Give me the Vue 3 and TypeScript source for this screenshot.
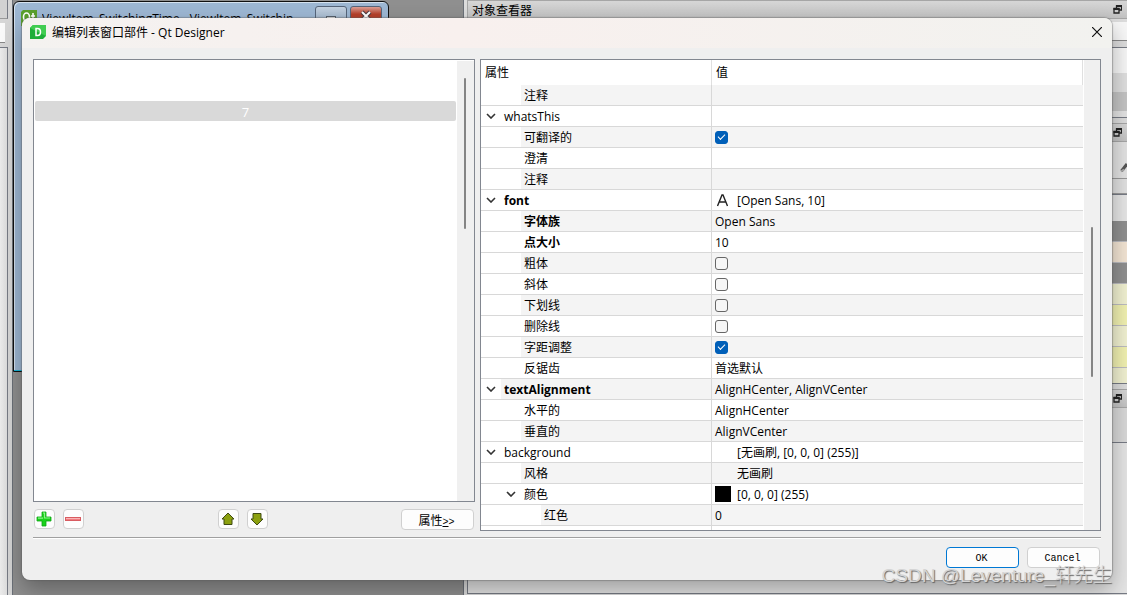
<script setup lang="ts">
interface PropertyRow {
  level: 0 | 1 | 2
  name: string
  value?: string
  expandable?: boolean
  changed?: boolean
  checked?: boolean
  icon?: 'font' | 'swatch' | 'none'
}

const rows: PropertyRow[] = [
  { level: 1, name: '注释' },
  { level: 0, name: 'whatsThis', expandable: true },
  { level: 1, name: '可翻译的', checked: true },
  { level: 1, name: '澄清' },
  { level: 1, name: '注释' },
  { level: 0, name: 'font', expandable: true, changed: true, value: '[Open Sans, 10]', icon: 'font' },
  { level: 1, name: '字体族', changed: true, value: 'Open Sans' },
  { level: 1, name: '点大小', changed: true, value: '10' },
  { level: 1, name: '粗体', checked: false },
  { level: 1, name: '斜体', checked: false },
  { level: 1, name: '下划线', checked: false },
  { level: 1, name: '删除线', checked: false },
  { level: 1, name: '字距调整', checked: true },
  { level: 1, name: '反锯齿', value: '首选默认' },
  { level: 0, name: 'textAlignment', expandable: true, changed: true, value: 'AlignHCenter, AlignVCenter' },
  { level: 1, name: '水平的', value: 'AlignHCenter' },
  { level: 1, name: '垂直的', value: 'AlignVCenter' },
  { level: 0, name: 'background', expandable: true, value: '[无画刷, [0, 0, 0] (255)]', icon: 'none' },
  { level: 1, name: '风格', value: '无画刷', icon: 'none' },
  { level: 1, name: '颜色', expandable: true, value: '[0, 0, 0] (255)', icon: 'swatch' },
  { level: 2, name: '红色', value: '0' },
  { level: 2, name: '' },
]

const listItems: string[] = ['', '', '7']
const selectedIndex = 2

const editorRows: string[] = ['gray', 'peach', 'gray', 'pale', 'yellow', 'pale', 'yellow', 'pale last']
</script>

<template>
  <div class="desktop">
    <div class="left-dock">
      <div class="tool-box"></div>
      <div class="field-box"></div>
      <div class="panel-box"></div>
    </div>

    <div class="mdi">
      <div class="form-window">
        <div class="form-title">
          <svg class="qt-icon" viewBox="0 0 16 16" aria-hidden="true">
            <path d="M2 0h14v14l-2 2H0V2z" fill="#5aa02c" />
            <ellipse cx="5.500" cy="7" rx="3" ry="4" fill="none" stroke="#fff" stroke-width="1.600" />
            <path d="M6 9l3 4M12 3v8h2M10 6h4" fill="none" stroke="#fff" stroke-width="1.600" />
          </svg>
          <span class="form-name">ViewItem_SwitchingTime - ViewItem_Switchin...</span>
          <button class="win-btn" type="button" aria-label="Minimize">
            <svg viewBox="0 0 12 12"><rect x="1.500" y="6.500" width="9" height="4" fill="#fff" stroke="#555f6c" /></svg>
          </button>
          <button class="win-btn close" type="button" aria-label="Close form">
            <svg viewBox="0 0 12 12">
              <path d="M2 2l8 8M10 2l-8 8" stroke="#4b3c42" stroke-width="4" />
              <path d="M2 2l8 8M10 2l-8 8" stroke="#fff" stroke-width="2" />
            </svg>
          </button>
        </div>
      </div>
    </div>

    <div class="right-dock">
      <div class="dock-head">
        <span>对象查看器</span>
        <svg class="float-icon" viewBox="0 0 9 9"><path d="M3.500 3V1h5v4H6M1 3.500h5v4.500H1z" fill="none" stroke="#222" stroke-width="1.300" /><path d="M3 1h6M.5 4h6" stroke="#222" stroke-width="2" /></svg>
      </div>
      <div class="filter"></div>
      <div class="object-list"><i></i><i class="mid"></i><i class="sel"></i></div>
      <div class="dock-head second">
        <svg class="float-icon" viewBox="0 0 9 9"><path d="M3.500 3V1h5v4H6M1 3.500h5v4.500H1z" fill="none" stroke="#222" stroke-width="1.300" /><path d="M3 1h6M.5 4h6" stroke="#222" stroke-width="2" /></svg>
      </div>
      <div class="tools">
        <svg viewBox="0 0 7 12"><path d="M1.500 10L7 3" stroke="#555" stroke-width="3" /><path d="M1 10.500l3-2" stroke="#aaa" stroke-width="2" /></svg>
      </div>
      <div class="object-name"></div>
      <div class="editor">
        <i v-for="(tone, i) in editorRows" :key="i" :class="tone"></i>
      </div>
      <div class="dock-head third">
        <svg class="float-icon" viewBox="0 0 9 9"><path d="M3.500 3V1h5v4H6M1 3.500h5v4.500H1z" fill="none" stroke="#222" stroke-width="1.300" /><path d="M3 1h6M.5 4h6" stroke="#222" stroke-width="2" /></svg>
      </div>
      <div class="resource-bar"></div>
      <div class="resource-body"></div>
    </div>

    <section class="dialog" role="dialog" aria-labelledby="dialog-title">
      <header class="titlebar">
        <svg class="app-icon" viewBox="0 0 16 14" aria-hidden="true">
          <path d="M3 0h13v11l-3 3H0V3z" fill="#1fae3a" />
          <path d="M3 0h13v11L0 3z" fill="#41cd52" />
          <path d="M6 3.500h1.500a3 3.500 0 0 1 0 7H6z" fill="none" stroke="#fff" stroke-width="1.500" />
        </svg>
        <h1 id="dialog-title">编辑列表窗口部件 - Qt Designer</h1>
        <button class="close-btn" type="button" aria-label="Close">
          <svg viewBox="0 0 10 10"><path d="M0 0l10 10M10 0L0 10" stroke="#111" stroke-width="1.200" /></svg>
        </button>
      </header>

      <div class="content">
        <div class="panes">
          <div class="items-pane">
            <div class="list-box">
              <ul>
                <li v-for="(item, i) in listItems" :key="i" :class="{ selected: i === selectedIndex }">{{ item }}</li>
              </ul>
              <div class="scroll"><div class="thumb"></div></div>
            </div>
            <div class="item-tools">
              <button class="tool" type="button" aria-label="New item">
                <svg viewBox="0 0 16 16">
                  <path d="M6 1h4v5h5v4h-5v5H6v-5H1V6h5z" fill="#19d21b" stroke="#0ca514" stroke-width=".8" />
                  <path d="M7 2h1.500v5H14M2 7.200h5" fill="none" stroke="#8df58a" stroke-width="1.200" />
                </svg>
              </button>
              <button class="tool" type="button" aria-label="Delete item">
                <svg viewBox="0 0 16 16">
                  <rect x=".5" y="6.500" width="15" height="3" fill="#f07c80" stroke="#d85b60" />
                  <path d="M1 7.500h14" stroke="#f9b3b5" />
                </svg>
              </button>
              <span class="gap"></span>
              <button class="tool" type="button" aria-label="Move item up">
                <svg viewBox="0 0 16 16"><path d="M8 2l6 6h-2v5.500H4V8H2z" fill="#8ba00f" stroke="#3f4a12" stroke-linejoin="round" /></svg>
              </button>
              <button class="tool" type="button" aria-label="Move item down">
                <svg viewBox="0 0 16 16"><path d="M8 14l6-6h-2V2.500H4V8H2z" fill="#8ba00f" stroke="#3f4a12" stroke-linejoin="round" /></svg>
              </button>
              <span class="gap wide"></span>
              <button class="push" type="button">属性<span class="latin"><u>&gt;</u>&gt;</span></button>
            </div>
          </div>

          <div class="tree-box">
            <div class="tree-view">
              <table>
                <thead>
                  <tr><th scope="col" class="col-name">属性</th><th scope="col" class="col-value">值</th></tr>
                </thead>
                <tbody>
                  <tr v-for="(row, i) in rows" :key="i" :class="{ shaded: i % 2 === 0 }">
                    <td class="name-cell">
                      <div :class="['name-line', 'level-' + row.level]">
                        <span class="branch">
                          <svg v-if="row.expandable" viewBox="0 0 10 6"><path d="M1 1l4 4 4-4" fill="none" stroke="#333" stroke-width="1.600" /></svg>
                        </span>
                        <label :for="'prop-' + i" :class="['label', { changed: row.changed }]">{{ row.name }}</label>
                      </div>
                    </td>
                    <td class="value-cell">
                      <div class="value-line">
                        <input v-if="row.checked !== undefined" :id="'prop-' + i" type="checkbox" :checked="row.checked" />
                        <span v-if="row.icon" class="icon">
                          <svg v-if="row.icon === 'font'" viewBox="0 0 16 16"><path d="M2.500 14L7 3h1l4.500 11M4 10h7" fill="none" stroke="#222" stroke-width="1.400" /></svg>
                          <i v-if="row.icon === 'swatch'" class="swatch"></i>
                        </span>
                        <output v-if="row.value" :id="'prop-' + i">{{ row.value }}</output>
                      </div>
                    </td>
                  </tr>
                </tbody>
              </table>
            </div>
            <div class="scroll"><div class="thumb low"></div></div>
          </div>
        </div>

        <hr />

        <footer class="actions">
          <button class="push latin default" type="button">OK</button>
          <button class="push latin" type="button">Cancel</button>
        </footer>
      </div>
    </section>

    <div class="watermark">CSDN @Leventure_轩先生</div>
  </div>
</template>

<style>
body {
  margin: 0;
}
</style>

<style scoped>
* {
  box-sizing: border-box;
}

.desktop {
  position: relative;
  display: grid;
  grid-template-columns: 13px 451px minmax(0, 1fr);
  min-height: 100vh;
  overflow: hidden;
  background: #e4e4e4;
  color: #000;
  font-family: "Open Sans", "Noto Sans CJK SC", sans-serif;
  font-size: 12px;
}

button {
  padding: 0;
  font: inherit;
  color: inherit;
}

svg {
  display: block;
}

/* Main window behind the dialog */
.left-dock {
  display: flex;
  flex-direction: column;
  gap: 4px;
  border-right: 1px solid #6b7078;
  background: #d6d6d6;
}

.tool-box,
.field-box,
.panel-box {
  width: 8px;
  border-right: 1px solid #777b85;
}

.tool-box {
  height: 19px;
  border-bottom: 1px solid #999;
  background: #d2d2d2;
}

.field-box {
  height: 20px;
  border: 0;
  border-bottom: 1px solid #888;
  width: 5px;
  background: #fafafa;
}

.panel-box {
  flex: 1;
  border-top: 1px solid #777b85;
  background: linear-gradient(90deg, #ebebeb, #dedede);
}

.mdi {
  padding-top: 1px;
  border-right: 1px solid #6b7078;
  background: #8f8f8f;
}

.form-window {
  width: 376px;
  height: 371px;
  border: 1px solid #111;
  border-radius: 6px 6px 0 0;
  background: #9db7d3;
  box-shadow: inset 0 -1px #19b5d8, inset 1px 1px #d5e2ef;
}

.form-title {
  display: flex;
  align-items: flex-start;
  gap: 3px;
  padding: 4px 6px 0 7px;
}

.qt-icon {
  width: 16px;
  height: 16px;
  margin: 4px 2px 0 0;
}

.form-name {
  flex: 1;
  height: 12px;
  padding-top: 4px;
  overflow: hidden;
  white-space: nowrap;
  line-height: 18px;
}

.win-btn {
  display: flex;
  justify-content: center;
  width: 32px;
  height: 20px;
  padding-top: 3px;
  border: 1px solid #56657a;
  border-radius: 3px;
  background: linear-gradient(#c3d1e0, #93a9c2);
}

.win-btn.close {
  background: linear-gradient(#dda096, #b5402a 40%);
}

.win-btn svg {
  width: 12px;
  height: 12px;
}

.right-dock {
  display: flex;
  flex-direction: column;
  padding-left: 3px;
  background: #dcdcdc;
}

.dock-head {
  display: flex;
  align-items: center;
  justify-content: space-between;
  height: 19px;
  padding: 0 5px 0 4px;
  border: 1px solid #a6a6a6;
  border-right: 0;
  background: linear-gradient(#d6d6d6, #c2c2c2);
}

.dock-head span {
  padding-top: 2px;
  line-height: 16px;
}

.float-icon {
  width: 9px;
  height: 9px;
  margin-left: auto;
}

.filter {
  height: 19px;
  margin: 3px 0 6px;
  border-bottom: 1px solid #888;
  background: #f7f7f7;
}

.object-list {
  display: flex;
  flex-direction: column;
  height: 71px;
  border-top: 1px solid #777b85;
  border-bottom: 1px solid #777b85;
  background: #e2e2e2;
}

.object-list i {
  flex: 0 0 25px;
  background: #f6f6f6;
}

.object-list .mid {
  flex-basis: 19px;
  background: #dedede;
}

.object-list .sel {
  flex-basis: 19px;
  background: #c3c3c3;
}

.second {
  margin-top: 5px;
}

.tools {
  display: flex;
  align-items: center;
  justify-content: flex-end;
  height: 37px;
  border-bottom: 1px solid #999;
  background: #e2e2e2;
}

.tools svg {
  width: 7px;
  height: 12px;
  margin-top: 14px;
}

.object-name {
  height: 15px;
  border-bottom: 1px solid #999;
  background: #e0e0e0;
}

.editor {
  display: flex;
  flex-direction: column;
  height: 190px;
  padding-top: 26px;
  border-top: 1px solid #777b85;
  border-bottom: 1px solid #777b85;
  background: #e6e6e6;
}

.editor i {
  flex: 0 0 21px;
  border-bottom: 1px solid #bcbcc0;
}

.editor .gray {
  background: #909090;
}

.editor .peach {
  background: #f2e4d3;
}

.editor .pale {
  background: #f0f0d0;
}

.editor .yellow {
  background: #f0f0b0;
}

.editor .last {
  flex: 1;
  border: 0;
}

.third {
  margin-top: 5px;
}

.resource-bar {
  height: 35px;
  border-bottom: 1px solid #777b85;
  background: #d8d8d8;
}

.resource-body {
  flex: 1;
  margin-bottom: 1px;
  border: 1px solid #777b85;
  border-top: 0;
  border-right: 0;
  background: #e4e4e4;
}

/* Dialog */
.dialog {
  position: absolute;
  inset: 18px 15px 15px 22px;
  display: flex;
  flex-direction: column;
  border-radius: 8px;
  overflow: hidden;
  background: #efefef;
  box-shadow: 0 0 1px 1px rgba(90, 90, 90, 0.4), 0 10px 22px rgba(0, 0, 0, 0.3);
}

.titlebar {
  display: flex;
  align-items: center;
  flex: 0 0 30px;
  padding: 0 10px 2px 8px;
  background: linear-gradient(90deg, #f4f2f0, #f8f0ee 40%, #f2f2ef);
}

.app-icon {
  width: 16px;
  height: 14px;
}

h1 {
  flex: 1;
  margin: 0 0 0 6px;
  padding-top: 2px;
  font-size: 12px;
  font-weight: 400;
  line-height: 18px;
}

.close-btn {
  border: 0;
  background: none;
}

.close-btn svg {
  width: 10px;
  height: 10px;
}

.content {
  display: flex;
  flex: 1;
  flex-direction: column;
  min-height: 0;
  padding: 11px 11px 12px;
}

.panes {
  display: grid;
  flex: 1;
  grid-template-columns: minmax(0, 442fr) minmax(0, 621fr);
  grid-template-rows: minmax(0, 1fr);
  gap: 5px;
  min-height: 0;
}

.items-pane {
  display: flex;
  flex-direction: column;
  gap: 7px;
  min-height: 0;
}

.list-box,
.tree-box {
  display: flex;
  min-height: 0;
  border: 1px solid #828790;
  background: #fff;
}

.list-box {
  flex: 1;
}

ul {
  flex: 1;
  margin: 0;
  padding: 1px;
  list-style: none;
}

li {
  height: 20px;
  border-radius: 2px;
  color: #fff;
  font-size: 13px;
  line-height: 22px;
  text-align: center;
}

.selected {
  background: #d9d9d9;
}

.scroll {
  flex: 0 0 17px;
  margin-top: 1px;
  background: #f0f0f0;
}

.thumb {
  width: 2px;
  height: 151px;
  margin: 17px 0 0 7px;
  border-radius: 1px;
  background: #858585;
}

.tree-box .scroll {
  flex-basis: 16px;
  margin: 0 0 0 1px;
}

.thumb.low {
  height: 150px;
  margin-top: 167px;
}

.item-tools {
  display: flex;
  align-items: flex-start;
  gap: 8px;
  height: 22px;
  padding: 0 1px;
}

.gap {
  flex: 118;
}

.gap.wide {
  flex: 117;
}

.tool,
.push {
  border: 1px solid #d0d0d0;
  border-radius: 4px;
  background: #fdfdfd;
}

.tool {
  display: flex;
  align-items: center;
  justify-content: flex-start;
  width: 21px;
  height: 20px;
  padding-left: 1px;
}

.tool svg {
  width: 16px;
  height: 16px;
}

.push {
  width: 73px;
  height: 21px;
  padding: 2px 2px 0 0;
  line-height: 17px;
}

.latin {
  font-family: "Liberation Mono", monospace;
  font-size: 10px;
}

.default {
  border-color: #0078d4;
}

.tree-view {
  flex: 1;
  min-width: 0;
  overflow: hidden;
}

table {
  width: 100%;
  border-spacing: 0;
  table-layout: fixed;
}

th {
  height: 25px;
  padding: 0 4px;
  border-right: 1px solid #e0e0e0;
  font-weight: 400;
  line-height: 16px;
  text-align: left;
}

.col-name {
  width: 231px;
}

td {
  padding: 0;
  border-bottom: 1px solid #d8d8d8;
}

.name-cell {
  border-right: 1px solid #d8d8d8;
}

.name-line,
.value-line {
  display: flex;
  height: 20px;
  line-height: 22px;
  white-space: nowrap;
}

.value-line {
  align-items: center;
  padding-left: 3px;
}

.value-line output {
  align-self: flex-start;
}

.shaded .label,
.shaded .value-cell {
  background: #f4f4f4;
}

.branch {
  display: flex;
  flex: 0 0 20px;
  align-items: center;
  justify-content: center;
}

.branch svg {
  width: 10px;
  height: 6px;
}

.level-1 {
  padding-left: 20px;
}

.level-2 {
  padding-left: 40px;
}

.label {
  flex: 1;
  padding-left: 3px;
}

.changed {
  font-weight: 700;
}

.icon {
  flex: 0 0 22px;
}

.icon svg,
.swatch {
  display: block;
  width: 16px;
  height: 16px;
}

.swatch {
  background: #000;
}

input[type="checkbox"] {
  appearance: none;
  display: grid;
  place-items: center;
  width: 13px;
  height: 13px;
  margin: 0;
  border: 1px solid #666;
  border-radius: 3px;
  background: #f6f6f6;
}

input[type="checkbox"]:checked {
  border-color: #005fb8;
  background: #005fb8;
}

input[type="checkbox"]:checked::before {
  content: "";
  width: 6px;
  height: 3px;
  margin-bottom: 2px;
  border: solid #fff;
  border-width: 0 0 1px 1px;
  transform: rotate(-45deg);
}

hr {
  width: 100%;
  height: 2px;
  margin: 6px 0 8px;
  border: 0;
  border-top: 1px solid #a0a0a0;
  background: #fff;
}

.actions {
  display: flex;
  justify-content: flex-end;
  gap: 8px;
  padding-right: 1px;
}

.watermark {
  position: absolute;
  right: 15px;
  bottom: 6px;
  color: #d4d4d4;
  font-family: "Liberation Sans", "Noto Sans CJK SC", sans-serif;
  font-size: 19px;
  font-weight: 300;
  line-height: 26px;
  text-shadow: 1px 1px 1px #666;
}
</style>
